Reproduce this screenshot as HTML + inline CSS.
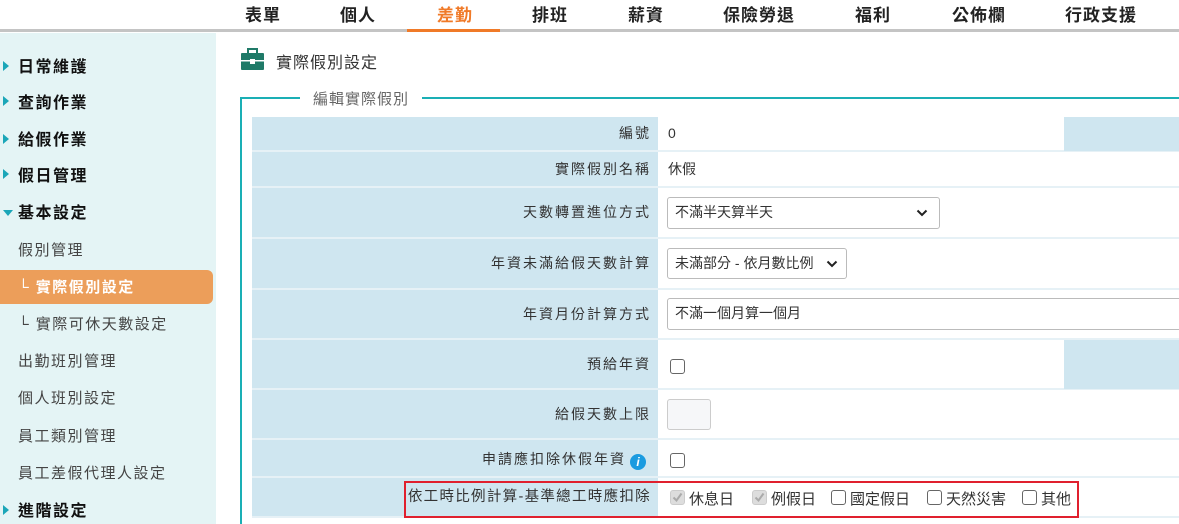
<!DOCTYPE html>
<html><head><meta charset="utf-8"><style>
*{margin:0;padding:0;box-sizing:border-box}
html,body{width:1179px;height:524px;overflow:hidden}
body{background:#fff;font-family:"Liberation Sans","Noto Sans CJK TC",sans-serif;position:relative;color:#333}
.a{position:absolute;white-space:nowrap}
.nav{font-size:17px;font-weight:bold;color:#222;top:1px;letter-spacing:1px}
.side{position:absolute;left:0;top:33px;width:216px;height:491px;background:#e4f4f5}
.m{font-size:16px;font-weight:bold;color:#111;letter-spacing:1.5px}
.s{font-size:15px;color:#444;letter-spacing:1.5px}
.tri{position:absolute;width:0;height:0;border-top:5px solid transparent;border-bottom:5px solid transparent;border-left:6px solid #1aa6b8}
.lab{position:absolute;left:252px;width:406px;background:#cfe6f0;text-align:right;padding-right:7px;font-size:14px;letter-spacing:2px;color:#333;border-bottom:2px solid #e6f1f6}
.val{position:absolute;left:658px;width:521px;border-bottom:2px solid #e6f1f6;font-size:14px;color:#333;padding-left:10px}
.sel{position:absolute;border:1px solid #bbb;border-radius:3px;background:#fff;font-size:14px;color:#333;padding-left:7px;line-height:29px}
.cb{position:absolute;width:15px;height:15px;border:1.5px solid #666;border-radius:3px;background:#fff}
.ck{border-color:#ccc;background:#ddd}
.ct{position:absolute;font-size:15px;color:#333}
</style></head><body>
<div class="a nav" style="left:245px">表單</div>
<div class="a nav" style="left:340px">個人</div>
<div class="a nav" style="left:437px;color:#f07a28">差勤</div>
<div class="a nav" style="left:532px">排班</div>
<div class="a nav" style="left:628px">薪資</div>
<div class="a nav" style="left:723px">保險勞退</div>
<div class="a nav" style="left:855px">福利</div>
<div class="a nav" style="left:952px">公佈欄</div>
<div class="a nav" style="left:1065px">行政支援</div>
<div class="a" style="left:0;top:29px;width:1179px;height:3px;background:#c4c4c4"></div>
<div class="a" style="left:407px;top:29px;width:93px;height:3px;background:#f07a28"></div>

<div class="side"></div>
<div class="tri" style="left:3px;top:61px"></div><div class="a m" style="left:18px;top:53px">日常維護</div>
<div class="tri" style="left:3px;top:96px"></div><div class="a m" style="left:18px;top:89px">查詢作業</div>
<div class="tri" style="left:3px;top:134px"></div><div class="a m" style="left:18px;top:126px">給假作業</div>
<div class="tri" style="left:3px;top:169px"></div><div class="a m" style="left:18px;top:162px">假日管理</div>
<div class="a" style="left:3px;top:210px;width:0;height:0;border-left:5px solid transparent;border-right:5px solid transparent;border-top:6px solid #1aa6b8"></div><div class="a m" style="left:18px;top:199px">基本設定</div>
<div class="a s" style="left:18px;top:239px">假別管理</div>
<div class="a" style="left:0;top:270px;width:213px;height:34px;background:#ec9e5a;border-radius:0 6px 6px 0"></div>
<div class="a s" style="left:18px;top:276px;color:#fff;font-weight:bold">└ 實際假別設定</div>
<div class="a s" style="left:18px;top:313px">└ 實際可休天數設定</div>
<div class="a s" style="left:18px;top:350px">出勤班別管理</div>
<div class="a s" style="left:18px;top:387px">個人班別設定</div>
<div class="a s" style="left:18px;top:425px">員工類別管理</div>
<div class="a s" style="left:18px;top:462px">員工差假代理人設定</div>
<div class="tri" style="left:3px;top:505px"></div><div class="a m" style="left:18px;top:497px">進階設定</div>

<svg class="a" style="left:241px;top:48px" width="23" height="22" viewBox="0 0 23 22"><rect x="7" y="1" width="9" height="5" fill="none" stroke="#1f7a68" stroke-width="2"/><rect x="0" y="5" width="23" height="17" rx="1" fill="#1f7a68"/><rect x="0" y="12" width="23" height="1.5" fill="#fff"/><rect x="9" y="11" width="5" height="5" fill="#fff"/></svg>
<div class="a" style="left:276px;top:49px;font-size:16px;color:#333;letter-spacing:1px">實際假別設定</div>

<div class="a" style="left:240px;top:97px;width:950px;height:440px;border:2px solid #1aafb5;border-right:none"></div>
<div class="a" style="left:300px;top:88px;background:#fff;padding:0 13px;font-size:15px;color:#666;letter-spacing:1px">編輯實際假別</div>

<div class="lab" style="top:117px;height:35px;line-height:33px">編號</div>
<div class="val" style="top:117px;height:35px;line-height:33px">0</div>
<div class="a" style="left:1064px;top:117px;width:115px;height:34px;background:#cfe6f0"></div>
<div class="lab" style="top:152px;height:36px;line-height:34px">實際假別名稱</div>
<div class="val" style="top:152px;height:36px;line-height:34px">休假</div>
<div class="lab" style="top:188px;height:51px;line-height:49px">天數轉置進位方式</div>
<div class="val" style="top:188px;height:51px"></div>
<div class="sel" style="left:667px;top:197px;width:273px;height:32px">不滿半天算半天<svg style="position:absolute;right:11px;top:11px" width="12" height="8" viewBox="0 0 12 8"><path d="M1.5 1.5 6 6 10.5 1.5" fill="none" stroke="#222" stroke-width="2"/></svg></div>
<div class="lab" style="top:239px;height:51px;line-height:49px">年資未滿給假天數計算</div>
<div class="val" style="top:239px;height:51px"></div>
<div class="sel" style="left:667px;top:248px;width:180px;height:31px">未滿部分 - 依月數比例<svg style="position:absolute;right:8px;top:11px" width="12" height="8" viewBox="0 0 12 8"><path d="M1.5 1.5 6 6 10.5 1.5" fill="none" stroke="#222" stroke-width="2"/></svg></div>
<div class="lab" style="top:290px;height:50px;line-height:48px">年資月份計算方式</div>
<div class="val" style="top:290px;height:50px"></div>
<div class="sel" style="left:667px;top:298px;width:520px;height:32px">不滿一個月算一個月</div>
<div class="lab" style="top:340px;height:50px;line-height:48px">預給年資</div>
<div class="val" style="top:340px;height:50px"></div>
<div class="cb" style="left:670px;top:359px"></div>
<div class="a" style="left:1064px;top:340px;width:115px;height:49px;background:#cfe6f0"></div>
<div class="lab" style="top:390px;height:50px;line-height:48px">給假天數上限</div>
<div class="val" style="top:390px;height:50px"></div>
<div class="a" style="left:667px;top:399px;width:44px;height:31px;border:1px solid #ccc;border-radius:3px;background:#f6f7f9"></div>
<div class="lab" style="top:440px;height:38px;line-height:38px;padding-right:12px">申請應扣除休假年資<span style="display:inline-block;width:16px;height:16px;border-radius:50%;background:#1a9be0;color:#fff;font-size:12px;line-height:16px;text-align:center;font-weight:bold;font-style:italic;vertical-align:-2px;margin-left:4px;letter-spacing:0">i</span></div>
<div class="val" style="top:440px;height:38px"></div>
<div class="cb" style="left:670px;top:453px"></div>
<div class="lab" style="top:478px;height:40px;line-height:38px;font-size:14.5px;letter-spacing:1.3px">依工時比例計算-基準總工時應扣除</div>
<div class="val" style="top:478px;height:40px"></div>
<div class="cb ck" style="left:670px;top:490px"><svg style="position:absolute;left:0;top:0" width="13" height="13" viewBox="0 0 13 13"><path d="M2.5 6.5 5.5 9.5 10.5 2.5" fill="none" stroke="#aaa" stroke-width="2"/></svg></div>
<div class="ct" style="left:689px;top:488px">休息日</div>
<div class="cb ck" style="left:752px;top:490px"><svg style="position:absolute;left:0;top:0" width="13" height="13" viewBox="0 0 13 13"><path d="M2.5 6.5 5.5 9.5 10.5 2.5" fill="none" stroke="#aaa" stroke-width="2"/></svg></div>
<div class="ct" style="left:771px;top:488px">例假日</div>
<div class="cb" style="left:831px;top:490px"></div><div class="ct" style="left:850px;top:488px">國定假日</div>
<div class="cb" style="left:927px;top:490px"></div><div class="ct" style="left:946px;top:488px">天然災害</div>
<div class="cb" style="left:1022px;top:490px"></div><div class="ct" style="left:1041px;top:488px">其他</div>
<div class="a" style="left:404px;top:481px;width:675px;height:37px;border:2px solid #e0202e"></div>
</body></html>
